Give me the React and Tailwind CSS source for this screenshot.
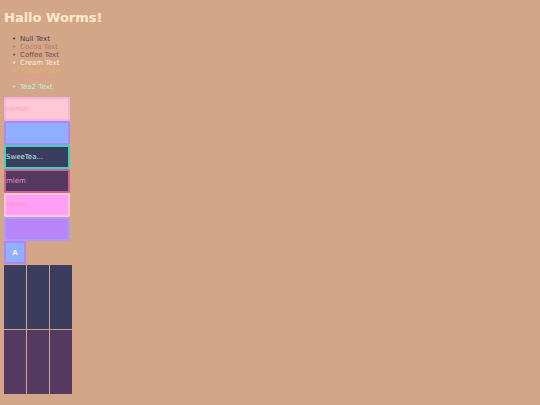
const textColors = [
  { label: "Null Text", color: "text-[#3b3d5e]" },
  { label: "Cocoa Text", color: "text-[#b07a64]" },
  { label: "Coffee Text", color: "text-[#7f4a50]" },
  { label: "Cream Text", color: "text-[#ffebcd]" },
  { label: "Caraml Text", color: "text-[#e5b064]" },
  { label: "Tea Text", color: "text-[#f59398]" },
  { label: "Tea2 Text", color: "text-[#b9f3d8]" },
];

const buttons = [
  { name: "home", label: "Home!", style: "bg-[#ffc8d7] border-[#f9b0dc] text-[#ff9fb9]" },
  { name: "sky", label: "", style: "bg-[#90b0ff] border-[#b285f5]" },
  { name: "sweetea", label: "SweeTea...", style: "bg-[#3b3d5e] border-[#35d6be] text-[#b4f0e6]" },
  { name: "mlem", label: "mlem", style: "bg-[#543a60] border-[#d0608f] text-[#e58abf]" },
  { name: "home-pink", label: "Home.", style: "bg-[#ff9ff5] border-[#ffc8d7] text-[#ff8fc4]" },
  { name: "violet", label: "", style: "bg-[#b886f8] border-[#a99fee]" },
];

const swatches = [
  "bg-[#3b3d5e]",
  "bg-[#3b3d5e]",
  "bg-[#3b3d5e]",
  "bg-[#543a60]",
  "bg-[#543a60]",
  "bg-[#543a60]",
];

const App = () => {
  return (
    <main className="min-h-screen bg-[#d4a688] px-1 pt-2 pb-2 font-['DejaVu_Sans',sans-serif] text-[7px] leading-[8px]">
      <h1 className="text-[13px] leading-[19px] font-bold text-[#ffebcd]">Hallo Worms!</h1>

      <ul className="mt-2 pl-2">
        {textColors.map((item) => (
          <li key={item.label} className={`flex before:w-2 before:content-['•'] ${item.color}`}>
            {item.label}
          </li>
        ))}
      </ul>

      <div className="mt-[6px] flex flex-col items-start">
        {buttons.map((button) => (
          <button
            key={button.name}
            type="button"
            aria-label={button.label || button.name}
            className={`h-6 w-[66px] rounded-[2px] border-2 text-left ${button.style}`}
          >
            {button.label}
          </button>
        ))}
        <button
          type="button"
          className="h-[23px] w-[22px] border-2 border-[#b285f5] bg-[#90b0ff] text-center font-bold text-[#ffebe0]"
        >
          A
        </button>
      </div>

      <div className="mt-px grid w-fit grid-cols-3 gap-px">
        {swatches.map((color, i) => (
          <div key={i} className={`h-16 w-[22px] ${color}`} />
        ))}
      </div>
    </main>
  );
};

export default App;
